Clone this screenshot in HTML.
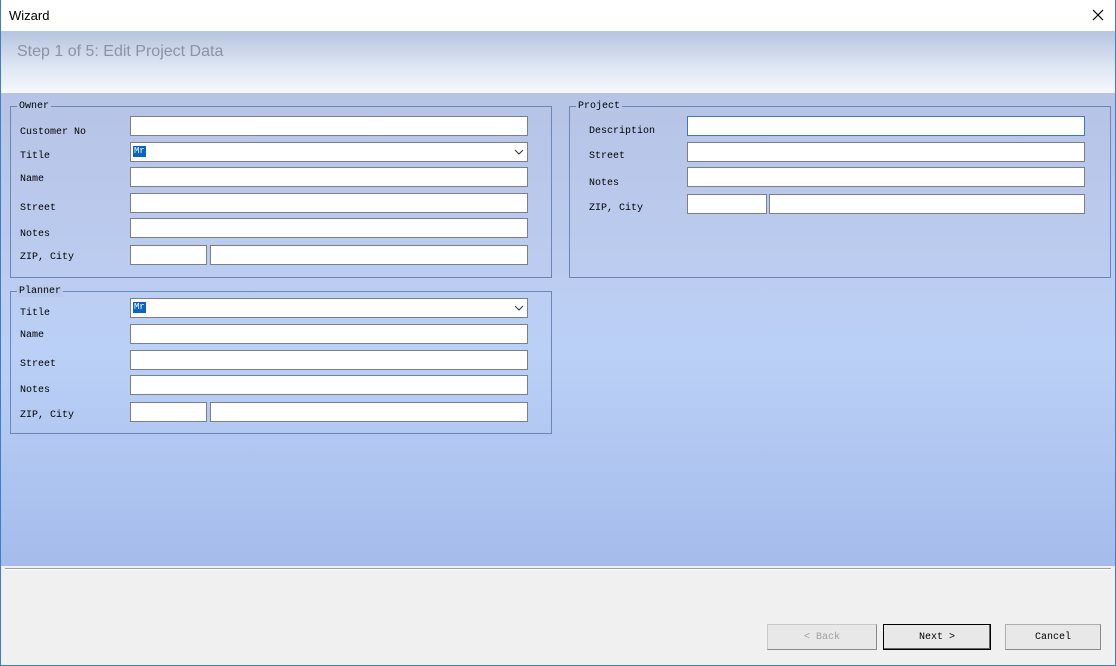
<!DOCTYPE html>
<html><head><style>
*{margin:0;padding:0;box-sizing:border-box}
body{width:1116px;height:666px;position:relative;overflow:hidden;background:#f0f0f0;font-family:"Liberation Mono","Noto Sans CJK SC",monospace;}
.a{position:absolute}
.win{left:0;top:0;width:1116px;height:666px;border:1px solid #3c7fc8;border-top:none}
.tb{left:0;top:0;width:1116px;height:31px;background:#fff;font-family:"Liberation Sans",sans-serif;font-size:13px;color:#000}
.hd{left:1px;top:31px;width:1114px;height:62px;background:linear-gradient(#b6c4df,#dfe7f3 60%,#f6f8fc)}
.bd{left:1px;top:93px;width:1114px;height:473px;background:linear-gradient(#b6c3e5 0%,#bccdf1 40%,#bad0f6 55%,#a5bcec 100%)}
.fs{border:1px solid #6b87b8;}
.lg{font-size:10px;color:#000;background:#b7c5e7;padding:0 2px;line-height:11px}
.lb{font-size:10px;color:#000;line-height:12px;margin-top:2px}
.in{background:#fff;border:1px solid #7a7f8a;height:20px}
.btn{height:26px;border:1px solid #adadad;background:#e8e8e8;font-size:10px;text-align:center;line-height:25px}
</style></head><body>
<div class="a tb"><span class="a" style="left:9px;top:8px">Wizard</span>
<svg class="a" style="left:1092px;top:9px" width="12" height="12"><path d="M1 1L11 11M11 1L1 11" stroke="#000" stroke-width="1.2"/></svg></div>
<div class="a hd"><span class="a" style="left:16px;top:12px;font-family:'Liberation Sans',sans-serif;font-size:16px;color:#8a94a6">Step 1 of 5: Edit Project Data</span></div>
<div class="a bd"></div>

<div class="a fs" style="left:10px;top:106px;width:542px;height:172px"></div>
<div class="a lg" style="left:17px;top:101px">Owner</div>
<div class="a lb" style="left:20px;top:125px">Customer No</div>
<div class="a lb" style="left:20px;top:149px">Title</div>
<div class="a lb" style="left:20px;top:172px">Name</div>
<div class="a lb" style="left:20px;top:201px">Street</div>
<div class="a lb" style="left:20px;top:227px">Notes</div>
<div class="a lb" style="left:20px;top:250px">ZIP, City</div>
<div class="a in" style="left:130px;top:116px;width:398px"></div>
<div class="a in" style="left:130px;top:142px;width:398px"><span class="a" style="left:2px;top:3px;background:#0a64c8;color:#fff;font-size:9px;line-height:11px;padding:0 1px">Mr</span><svg class="a" style="left:383px;top:6px" width="10" height="6"><path d="M1 1L5 5L9 1" stroke="#333" fill="none"/></svg></div>
<div class="a in" style="left:130px;top:167px;width:398px"></div>
<div class="a in" style="left:130px;top:193px;width:398px"></div>
<div class="a in" style="left:130px;top:218px;width:398px"></div>
<div class="a in" style="left:130px;top:245px;width:77px"></div>
<div class="a in" style="left:210px;top:245px;width:318px"></div>

<div class="a fs" style="left:10px;top:291px;width:542px;height:143px"></div>
<div class="a lg" style="left:17px;top:286px;background:#b9c9ed">Planner</div>
<div class="a lb" style="left:20px;top:306px">Title</div>
<div class="a lb" style="left:20px;top:328px">Name</div>
<div class="a lb" style="left:20px;top:357px">Street</div>
<div class="a lb" style="left:20px;top:383px">Notes</div>
<div class="a lb" style="left:20px;top:408px">ZIP, City</div>
<div class="a in" style="left:130px;top:298px;width:398px"><span class="a" style="left:2px;top:3px;background:#0a64c8;color:#fff;font-size:9px;line-height:11px;padding:0 1px">Mr</span><svg class="a" style="left:383px;top:6px" width="10" height="6"><path d="M1 1L5 5L9 1" stroke="#333" fill="none"/></svg></div>
<div class="a in" style="left:130px;top:324px;width:398px"></div>
<div class="a in" style="left:130px;top:350px;width:398px"></div>
<div class="a in" style="left:130px;top:375px;width:398px"></div>
<div class="a in" style="left:130px;top:402px;width:77px"></div>
<div class="a in" style="left:210px;top:402px;width:318px"></div>

<div class="a fs" style="left:569px;top:106px;width:542px;height:172px"></div>
<div class="a lg" style="left:576px;top:101px">Project</div>
<div class="a lb" style="left:589px;top:124px">Description</div>
<div class="a lb" style="left:589px;top:149px">Street</div>
<div class="a lb" style="left:589px;top:176px">Notes</div>
<div class="a lb" style="left:589px;top:201px">ZIP, City</div>
<div class="a in" style="left:687px;top:116px;width:398px;border-color:#3a78c0"></div>
<div class="a in" style="left:687px;top:142px;width:398px"></div>
<div class="a in" style="left:687px;top:167px;width:398px"></div>
<div class="a in" style="left:687px;top:194px;width:80px"></div>
<div class="a in" style="left:769px;top:194px;width:316px"></div>

<div class="a" style="left:5px;top:568px;width:1106px;height:2px;border-top:1px solid #a0a0a0;border-bottom:1px solid #fff"></div>
<div class="a btn" style="left:767px;top:624px;width:110px;color:#a0a0a0;border-color:#c8c8c8;border-right-color:#888;border-bottom-color:#888">&lt; Back</div>
<div class="a btn" style="left:883px;top:624px;width:108px;border:1px solid #000;box-shadow:inset -1px -1px 0 #666">Next &gt;</div>
<div class="a btn" style="left:1005px;top:624px;width:96px;border-right-color:#888;border-bottom-color:#888">Cancel</div>
<div class="a win"></div>
</body></html>
